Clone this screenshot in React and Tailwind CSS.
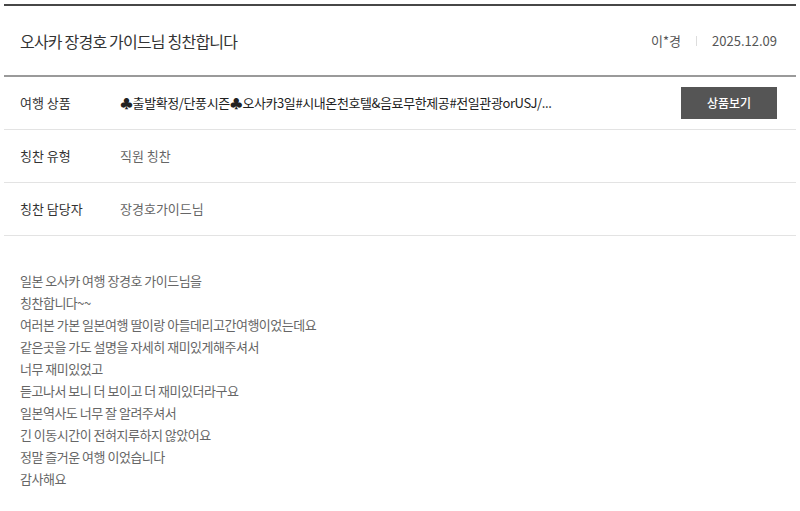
const font = { fontFamily: '"Noto Sans CJK KR", "Noto Sans", sans-serif' };

const rows = [
  { label: "여행 상품", value: "♣출발확정/단풍시즌♣오사카3일#시내온천호텔&음료무한제공#전일관광orUSJ/...", button: true },
  { label: "칭찬 유형", value: "직원 칭찬" },
  { label: "칭찬 담당자", value: "장경호가이드님" },
];

const body = [
  "일본 오사카 여행 장경호 가이드님을",
  "칭찬합니다~~",
  "여러본 가본 일본여행 딸이랑 아들데리고간여행이었는데요",
  "같은곳을 가도 설명을 자세히 재미있게해주셔서",
  "너무 재미있었고",
  "듣고나서 보니 더 보이고 더 재미있더라구요",
  "일본역사도 너무 잘 알려주셔서",
  "긴 이동시간이 전혀지루하지 않았어요",
  "정말 즐거운 여행 이었습니다",
  "감사해요",
];

export default function App() {
  return (
    <div className="bg-white min-h-[511px] px-[4px] pt-[4px]" style={font}>
      <div className="border-t-2 border-[#474747]">
        {/* Title */}
        <div className="h-[71px] flex items-center justify-between pl-[16px] pr-[19px] border-b-2 border-[#9a9a9a]">
          <h1 className="text-[16px] tracking-[-0.8px] text-[#333] font-normal">오사카 장경호 가이드님 칭찬합니다</h1>
          <div className="flex items-center text-[13px] text-[#555]">
            <span>이*경</span>
            <span className="mx-[15px] w-px h-[10px] bg-[#ddd]"></span>
            <span>2025.12.09</span>
          </div>
        </div>

        {/* Info rows */}
        {rows.map((r) => (
          <div key={r.label} className="h-[53px] flex items-center pl-[16px] pr-[19px] border-b border-[#e3e3e3]">
            <div className="w-[100px] text-[13px] text-[#333]">{r.label}</div>
            <div className={`flex-1 text-[13px] ${r.button ? "text-[#222] tracking-[-0.4px]" : "text-[#666]"}`}>{r.value}</div>
            {r.button && (
              <button className="w-[96px] h-[32px] bg-[#555] text-white text-[12px] font-medium">상품보기</button>
            )}
          </div>
        ))}

        {/* Body */}
        <div className="pl-[16px] pt-[34px] text-[13px] leading-[22px] tracking-[-0.5px] text-[#666]">
          {body.map((line, i) => (
            <p key={i}>{line}</p>
          ))}
        </div>
      </div>
    </div>
  );
}
